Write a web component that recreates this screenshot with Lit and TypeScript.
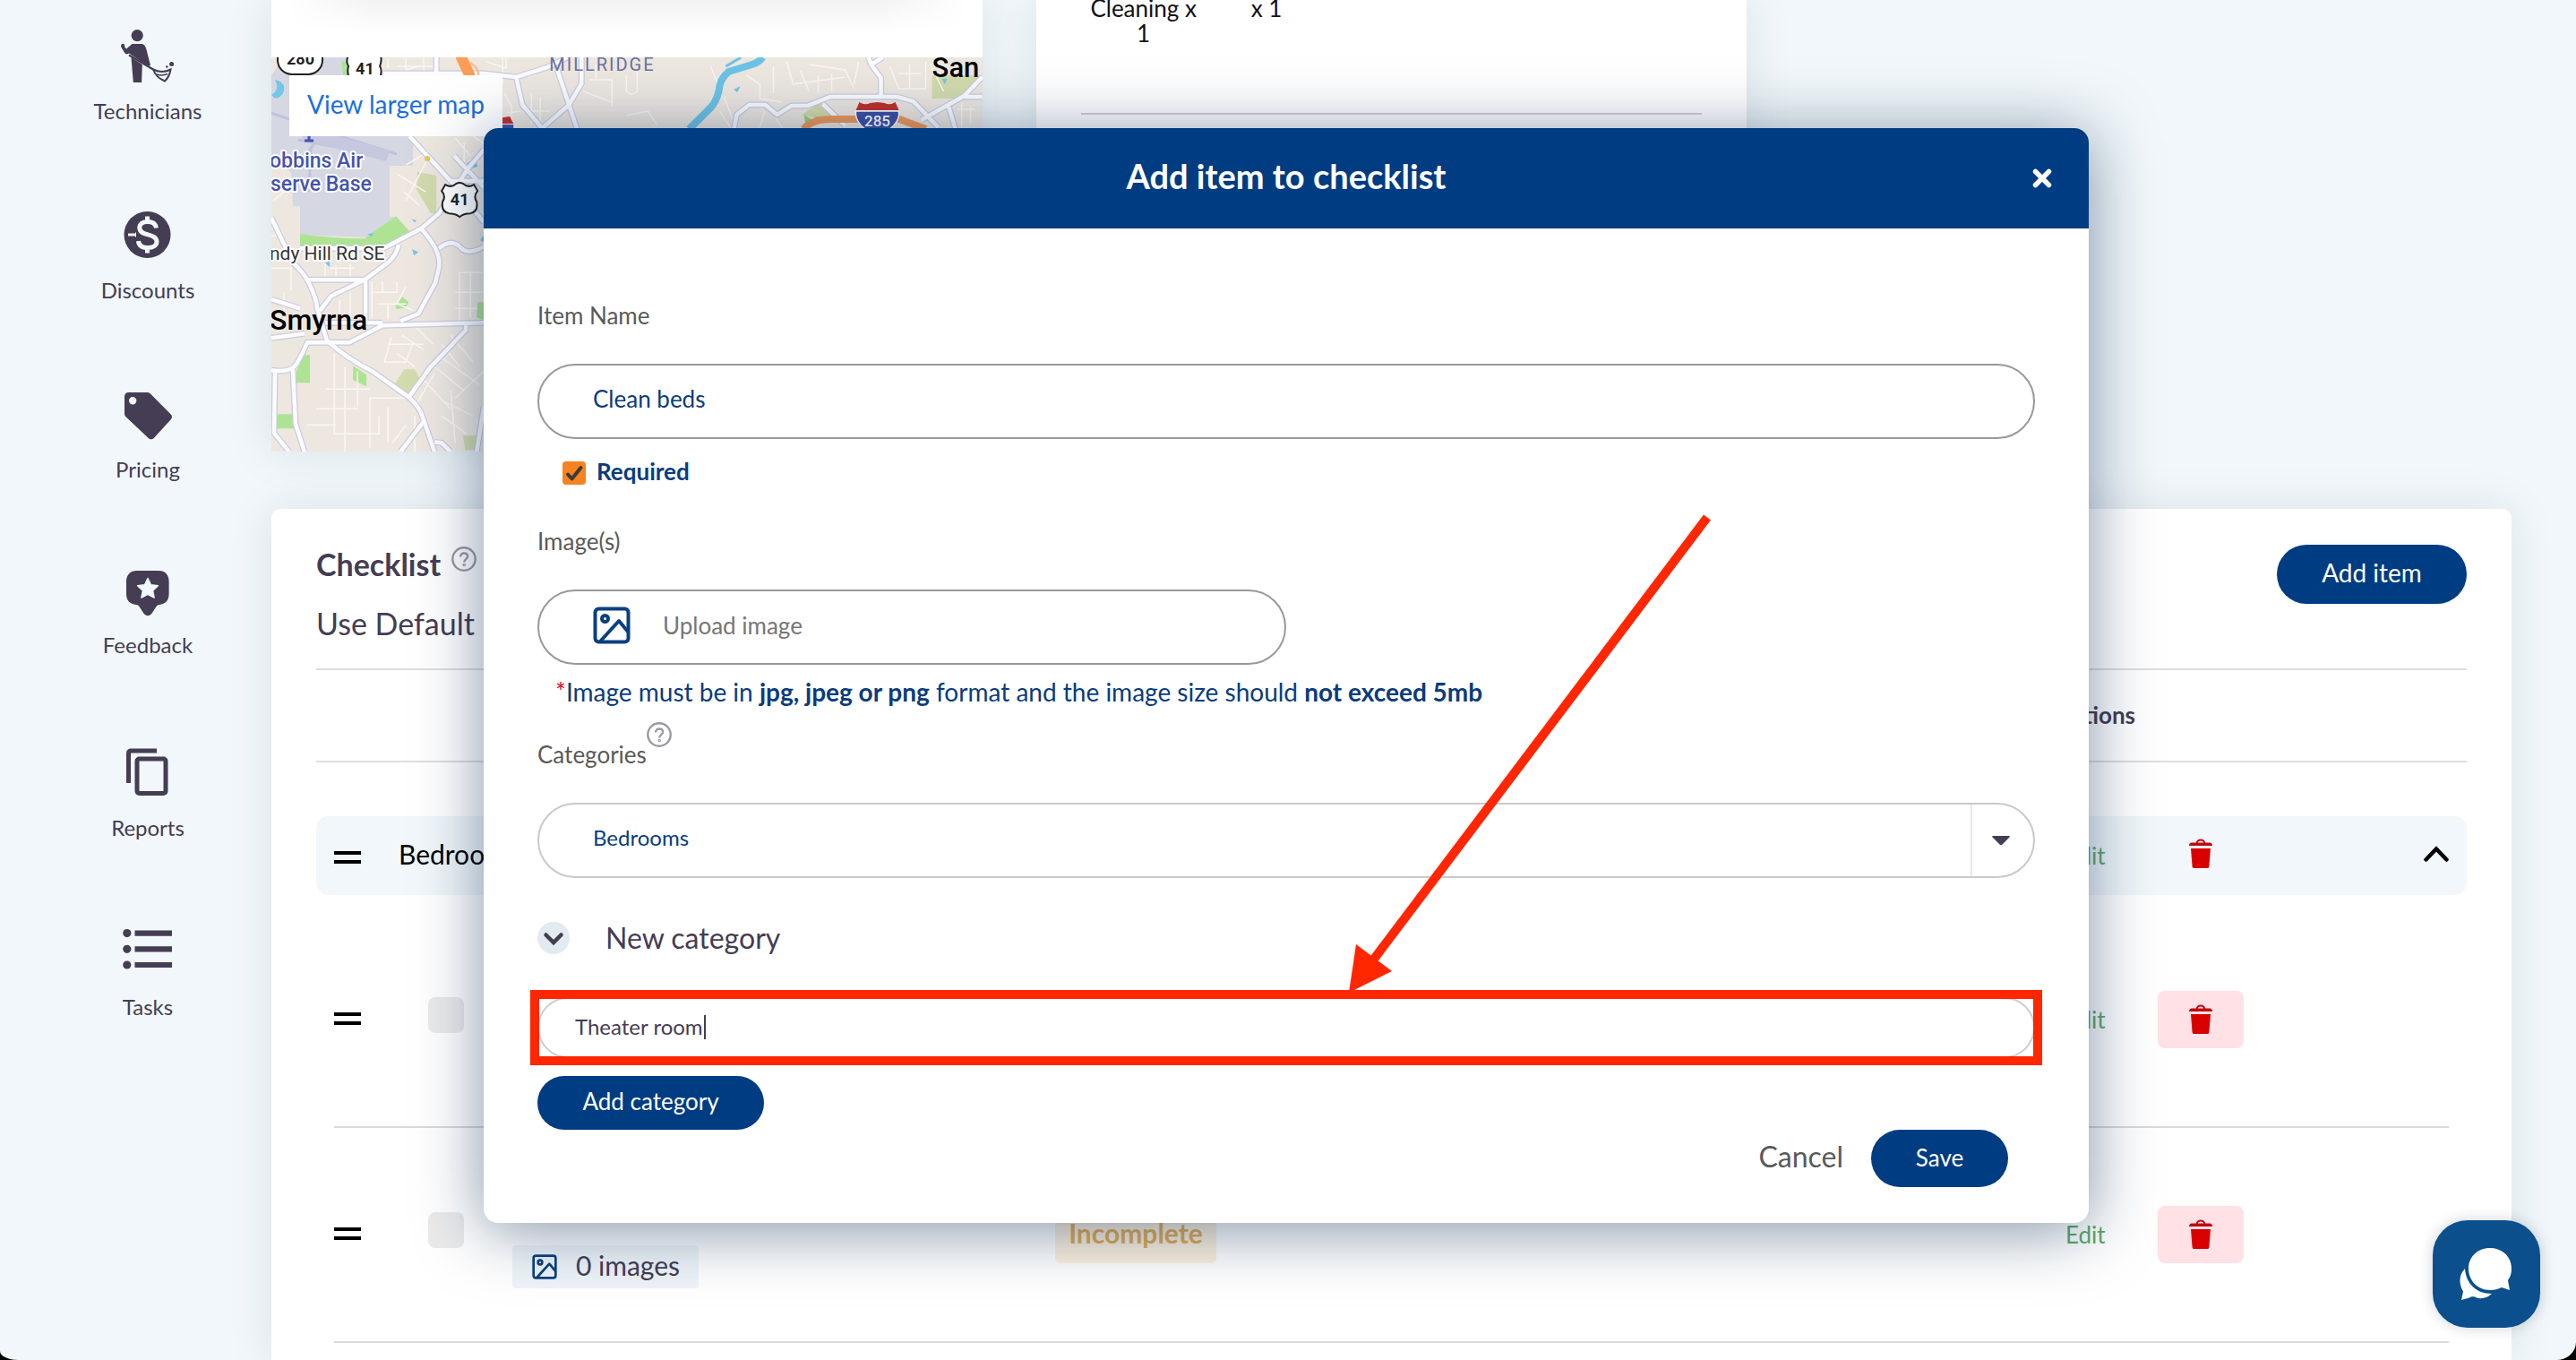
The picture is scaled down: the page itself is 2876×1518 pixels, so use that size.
import { LitElement, html, css, svg } from "lit";
import { customElement, property } from "lit/decorators.js";

const ink = "#443d53";

const navItems = [
  {
    label: "Technicians",
    height: 60,
    art: svg`
      <circle cx="18.2" cy="6.6" r="6.6"/>
      <path d="M12.5 16h10c3.400 0 5 2.600 6 6.500l4.500 17.500-3 .8L9 26.500l-1.800.8c-1.400.4-2.300 0-3-1.200L.4 19.800c-1-2 .3-4.200 2.300-4l1.300 1 .5 3.200 1.700 1.600z"/>
      <path d="M11.500 31l12.300 8-.7 20h-9.300z"/>
      <path d="M9 28.500L36 44.500" fill="none" stroke="#443d53" stroke-width="2.200"/>
      <path d="M36 44.500c7 3.500 13 3.500 19.500 0-.8 4.800-2.600 9.500-6.500 13-5-2-10.500-6-13-13z" fill="none" stroke="#443d53" stroke-width="2"/>
      <path d="M40 50c4.500 1.500 8 1.200 12-.5" fill="none" stroke="#443d53" stroke-width="1.500"/>
      <circle cx="56.600" cy="38.600" r="2.500"/><circle cx="51.300" cy="41.500" r="1.200"/>`,
  },
  {
    label: "Discounts",
    height: 60,
    art: svg`
      <circle cx="29.500" cy="29" r="26"/>
      <path d="M8 29h9M29.500 8.500v7M29.500 42.500v7M39.500 21.500c-.6-4.600-4.300-7-9.700-7-5.600 0-9 2.600-9 6.800 0 4.700 4 6.200 9.400 7.600 5.400 1.400 9.800 3 9.800 7.900 0 4.200-4 6.700-9.800 6.700-6.200 0-10.300-2.500-10.700-7.500" fill="none" stroke="#f1f7fa" stroke-width="5"/>
      <path d="M6 24h10v3.500H6zM6 30.500h10V35H6z"/>`,
  },
  {
    label: "Pricing",
    height: 60,
    art: svg`
      <path fill-rule="evenodd" d="M8.500 5h20.500c1.800 0 3 .6 4.200 1.700l22.300 22.500c2 2 2 4.200 0 6.200L37 55.700c-2 2.200-4.500 2.200-6.600.1L5.800 32.500C4.600 31.300 4 30 4 28.400V9.500C4 7 6 5 8.500 5zM13.200 10a4.200 4.200 0 1 0 0 8.400 4.200 4.200 0 0 0 0-8.400z"/>`,
  },
  {
    label: "Feedback",
    height: 56,
    art: svg`
      <path fill-rule="evenodd" d="M18 4h24c7.500 0 11.600 4.500 11.600 12v14c0 7-4 11.400-10.600 12-2 .2-3 1.200-4 2.800l-4.500 7c-2.500 3.200-6.500 3.200-9 0l-4.500-7c-1-1.600-2-2.600-4-2.800C10 41.400 6 37 6 30V16C6 8.500 10.500 4 18 4z"/>
      <path d="M30 12.500l3.500 7.300 7.900 1-5.800 5.500 1.500 7.900-7.100-3.900-7.100 3.900 1.500-7.900-5.800-5.500 7.900-1z" fill="#f1f7fa" stroke="#f1f7fa" stroke-width="1.500" stroke-linejoin="round"/>`,
  },
  {
    label: "Reports",
    height: 60,
    art: svg`
      <path d="M40 5H11.500Q8.500 5 8.500 8v33" fill="none" stroke="#443d53" stroke-width="5"/>
      <rect x="18" y="14" width="32" height="38.500" rx="2.500" fill="none" stroke="#443d53" stroke-width="5"/>`,
  },
  {
    label: "Tasks",
    height: 60,
    art: svg`
      <circle cx="6.800" cy="8.600" r="4.600"/><circle cx="6.800" cy="26.300" r="4.600"/><circle cx="6.800" cy="44" r="4.600"/>
      <path d="M15.500 5.500h41.500v6.200H15.500zM15.500 23.200h41.500v6.200H15.500zM15.500 40.900h41.500v6.200H15.500z"/>`,
  },
];

const trash = html`<svg width="26" height="34" viewBox="0 0 26 34" aria-hidden="true">
  <path d="M8.500 5.500C9 2.800 10.500 1.500 13 1.500s4 1.300 4.500 4" fill="none" stroke="#c00a10" stroke-width="2"/>
  <path d="M3 4.500h20c1.800 0 3 1.200 3 3.500H0c0-2.300 1.200-3.500 3-3.500z" fill="#c00a10"/>
  <path d="M2 11h22l-1.600 20c-.2 1.400-.8 2-2.200 2H5.800c-1.400 0-2-.6-2.200-2z" fill="#d90000"/>
</svg>`;

const picture = (size: number) => html`<svg width=${size} height=${size} viewBox="0 0 42 42" fill="none" stroke="#0a4080" stroke-width="4" stroke-linejoin="round" aria-hidden="true">
  <rect x="2.500" y="2.500" width="37" height="37" rx="4"/>
  <circle cx="13.500" cy="13.500" r="3.500"/>
  <path d="M8 39l21-23 10 12"/>
</svg>`;

const help = html`<svg width="28" height="28" viewBox="0 0 28 28" fill="none" stroke="#9b99a3" stroke-width="2.400" aria-hidden="true">
  <circle cx="14" cy="14" r="12.700"/>
  <path d="M10 11.500c0-2.400 1.700-4 4.100-4s4 1.500 4 3.600c0 3-3.900 3-3.900 6.300"/>
  <circle cx="14.200" cy="20.500" r=".6"/>
</svg>`;

const drag = html`<svg width="30" height="16" viewBox="0 0 30 16" aria-hidden="true">
  <path d="M0 1h30v4H0zM0 11h30v4H0z"/>
</svg>`;

@customElement("area-map")
class AreaMap extends LitElement {
  static styles = css`
    :host { display: block; position: relative; height: 440px; overflow: hidden; background: #ede7e0; }
    .canvas { display: block; width: 100%; height: 440px; font-family: Roboto, "Noto Sans", sans-serif; }
    .larger {
      position: absolute; left: 20px; top: 20px; padding: 14px 20px 18px; background: #fff;
      color: #1a6fe0; font-size: 28px; line-height: 36px; text-decoration: none; white-space: nowrap;
    }
  `;

  render() {
    const roads = `M154 88L200 138L237 184M0 179L24 229Q36 240 42 252Q50 268 51 280L62 316Q84 336 114 351L152 378Q166 390 169 402L182 440
      M40 248H104L130 229Q140 220 142 209M105 248V296M0 313L37 308M0 349Q22 352 28 342Q36 328 40 318H87L124 299L237 296
      M60 296H124M32 213H125L167 191L187 174L220 123L237 103M167 191Q190 216 187 234L183 251L164 286L144 294
      M187 213Q200 202 210 211Q218 222 237 211M54 283L67 266L104 248M217 299V304L177 346L154 378M4 349L3 419L20 440M24 348L27 409L37 440
      M170 406L144 440M182 429L190 430L200 440M237 390L229 440M125 18H184V0M184 18H237L273 22L308 11L330 0
      M319 14L332 53L341 80M346 0L346 29L332 53L301 80M273 22L280 53L301 78M516 80L519 64L533 53H551L564 64L580 54H598L623 44H698L716 49L744 78
      M680 44V23L669 8L666 0M669 8L682 0M793 22L773 43L755 53L725 70M773 44H793M755 53L763 80M0 270L32 280M204 110L237 145M615 52L640 76M200 138H237`;
    const lanes = `M0 235H22V260M14 262V300M70 330V420M82 345V440M96 350V390M60 370H110M50 392H96M40 410H72M70 420H120V400M110 380V436M110 380H150M130 390V430
      M60 230V246M72 232V246M88 230V247M66 225V235H92M112 250V290M112 262H140V250M118 275H150M124 250V262M130 275V292M150 256L140 275L158 282M76 270V292M88 262V290
      M130 320H170M134 312L126 340H150L158 318M140 330L160 345M146 310L170 326M160 300L180 320M190 320L210 345M200 310L225 340M182 345L215 372M190 335L232 365M170 360L200 392M182 352L160 390
      M210 240V296M222 240V290M210 240H236M205 262H237M205 280H230M195 385L225 400M190 400L218 420M200 372L205 430M160 400V440M150 410L135 430M205 380L237 350
      M2 160L14 150M0 200L12 196V215M140 130L172 150M150 120L175 105M148 150L165 165M176 110L150 160M215 95V120M205 90L222 110M225 88L237 96
      M130 2V12M150 0V14L165 10M170 0V15M140 10H180M258 30V0M240 5L262 12V0M290 40L290 75M300 45V78M280 60H310M355 25H380V55M348 38L380 50M362 25V8
      M396 20V38Q402 44 408 38V16M396 65L420 60L430 75M260 40L268 55V78M262 62L278 60M498 30L490 10M560 10V40M590 15L600 38M530 20L545 30V46L570 50M575 5L582 30L640 22
      M600 8L640 14L650 35M610 20V40M625 18V38M655 5L650 30M690 10L700 35H730V5M700 18H725M712 8V34M735 8L750 38M765 58H785M770 50V78M780 55V74M550 60L545 78M562 66L570 79M505 45L515 70M500 60L512 78`;
    return html`
      <svg class="canvas" viewBox="0 0 793 440" preserveAspectRatio="xMinYMin slice" aria-hidden="true">
        <path d="M14 0H120L132 60H158V121H132V178L139 178L114 201L32 198V166H24L22 128L0 115V20z" fill="#d5d7e2"/>
        <path d="M0 62L40 76L140 108M30 92L125 110M60 80L30 120M44 100L42 150" stroke="#bfc2dc" stroke-width="3" fill="none"/>
        <path d="M30 76L132 104L128 116L36 92z" fill="#c5c8de"/>
        <path d="M32 197Q70 202 104 202L139 177L154 194L134 205L125 213H32zM78 4L86 6V20H80zM36 332H43V363H27L28 350zM91 344L106 354V367L91 360zM6 398H27V414H5zM230 273H237V293L229 290zM138 278L146 267L153 273L150 279L140 281zM143 358L152 348L158 352L150 361z" fill="#aee394"/>
        <path d="M163 128L184 132V174H178L162 148zM592 64L612 50L624 58L622 68L608 68zM737 20H793L772 46H737zM138 364L148 348H160L165 358L152 376zM214 422H229V438H216z" fill="#d2dbac"/>
        <path d="M594 64L604 70L596 76zM606 66H618V70L608 72z" fill="#8fd67f"/>
        <path d="M4 25Q18 28 13 40Q6 50 0 42Q10 36 4 25zM60 229L67 227V236zM218 118L228 114L230 122L222 124zM157 214L164 217L159 221zM156 180L162 182L160 184zM107 197L114 196L112 200zM516 36L523 32L520 39L517 37zM748 24L754 24L751 30zM233 204L237 198V206z" fill="#71c7e8"/>
        <path d="${lanes}" stroke="#faf7f3" stroke-width="1.500" fill="none"/>
        <path d="${roads}" stroke="#c9cce0" stroke-width="7" fill="none" stroke-linejoin="round"/>
        <path d="${roads}" stroke="#fcfcff" stroke-width="4.500" fill="none" stroke-linejoin="round"/>
        <path d="M548 0Q544 6 533 9L510 16Q500 24 499 38Q496 50 490 56L466 80" stroke="#6cc3e6" stroke-width="8" fill="none"/>
        <path d="M524 0L507 10" stroke="#6cc3e6" stroke-width="3" fill="none"/>
        <path d="M594 80Q602 69 626 69H655M698 68L730 80" stroke="#f0995a" stroke-width="8" fill="none"/>
        <path d="M211 -2L222 22" stroke="#ff9c55" stroke-width="12" fill="none"/>
        <path d="M222 6Q234 14 230 22" stroke="#ffb888" stroke-width="2" fill="none"/>
        <circle cx="174" cy="113" r="3" fill="#e8c84c"/>
        <rect x="7" y="-14" width="50" height="33" rx="16" fill="#fff" stroke="#222" stroke-width="2"/>
        <text x="17" y="8" font-size="18" font-weight="700" fill="#222">280</text>
        <path d="M87 -4Q82 4 86 10Q84 16 87 24H121Q124 14 121 10Q124 2 121 -4z" fill="#fff" stroke="#222" stroke-width="2"/>
        <text x="94" y="19" font-size="18" font-weight="700" fill="#222">41</text>
        <path d="M194 142Q201 146 206 141Q210 139 214 141Q219 146 226 142L230 149Q225 155 229 161Q231 172 222 174Q214 174 210 178Q206 174 198 174Q189 172 191 161Q195 155 190 149z" fill="#fff" stroke="#222" stroke-width="2"/>
        <text x="210" y="165" font-size="18" font-weight="700" text-anchor="middle" fill="#222">41</text>
        <path d="M652 60Q650 76 676 88Q702 76 700 60z" fill="#3c4fa6" stroke="#fff" stroke-width="1.500"/>
        <path d="M652 59L656 50Q662 54 668 51L676 50L684 51Q690 54 696 50L700 59z" fill="#c0302c"/>
        <text x="676" y="77" font-size="17" font-weight="500" text-anchor="middle" fill="#fff">285</text>
        <path d="M246 74V69L266 66L270 74z" fill="#c0302c"/>
        <path d="M246 75H270V82H246z" fill="#3c4fa6"/>
        <path d="M37 86H47M42 80V92M37 93H47" stroke="#4553b0" stroke-width="3"/>
        <g paint-order="stroke" stroke="#fff" stroke-width="4" stroke-linejoin="round">
          <text x="-2" y="123" font-size="23" font-weight="500" fill="#4553b0">obbins Air</text>
          <text x="-1" y="149" font-size="23" font-weight="500" fill="#4553b0">serve Base</text>
          <text x="-2" y="226" font-size="21" fill="#333">ndy Hill Rd SE</text>
        </g>
        <text x="-2" y="304" font-size="32" font-weight="500" fill="#000">Smyrna</text>
        <text x="310" y="15" font-size="20" fill="#6a70a0" letter-spacing="2">MILLRIDGE</text>
        <text x="737" y="22" font-size="31" font-weight="500" fill="#000">San</text>
      </svg>
      <a class="larger" href="#map">View larger map</a>
    `;
  }
}

@customElement("status-tag")
class StatusTag extends LitElement {
  @property() label = "";
  static styles = css`
    :host { display: block; width: 180px; box-sizing: border-box; padding: 12px 0 16px; border-radius: 6px; background: #fdf1df;
      color: #e2ad55; font-size: 30px; line-height: 36px; font-weight: 700; text-align: center; }
  `;
  render() { return html`${this.label}`; }
}

@customElement("app-root")
class AppRoot extends LitElement {
  static styles = css`
    :host { display: block; background: #000; font-family: Lato, "Liberation Sans", sans-serif; color: #443d53; }
    * { box-sizing: border-box; }
    button, input, select { font: inherit; color: inherit; margin: 0; }
    button { border: 0; background: none; padding: 0; cursor: pointer; }
    svg { display: block; flex: none; }
    a { color: inherit; text-decoration: none; }

    .page { position: relative; display: flex; min-height: 100vh; overflow: hidden; background: #f1f7fa;
      border-radius: 0 0 22px 20px / 0 0 20px 10px; }
    .sidebar { width: 303px; flex: none; padding: 33px 0 0 27px; }
    .nav-item { display: flex; flex-direction: column; align-items: center; gap: 16px; height: 200px; font-size: 24px; line-height: 30px; }
    .main { flex: 1; min-width: 0; display: flex; flex-direction: column; gap: 64px; padding-right: 72px; }
    .cards { display: grid; grid-template-columns: repeat(3, 1fr); gap: 60px; height: 504px; }
    .card { background: #fff; box-shadow: 0 0 50px rgba(20, 60, 70, 0.1); }
    .strip { height: 64px; background: linear-gradient(#f3f3f3, #fff 36px);
      mask-image: linear-gradient(to right, transparent 2%, #000 14%, #000 86%, transparent 98%); }
    .order { overflow: hidden; }
    .amounts { display: flex; gap: 60px; margin: -5px 60px 75px; font-size: 26px; line-height: 28px; color: #111; }
    .amount { width: 120px; text-align: center; }
    .rule { border: 0; height: 2px; margin: 0 50px; background: #d4d2d2; }

    .checklist { flex: 1; padding: 0 50px; border-radius: 10px 10px 0 0; }
    .intro { display: flex; justify-content: space-between; align-items: flex-start; height: 180px; padding-top: 40px; border-bottom: 2px solid #dedede; font-size: 34px; line-height: 40px; }
    .headings { display: flex; flex-direction: column; gap: 26px; padding-top: 2px; }
    .heading { display: flex; gap: 12px; margin: 0; font-size: 34px; font-weight: 700; }
    .pill { border-radius: 40px; background: #003c82; color: #fff; }
    .add-item { width: 212px; height: 66px; padding-bottom: 4px; font-size: 28px; }

    .items, .items thead, .items tbody { display: block; }
    .line { display: grid; grid-template-columns: 72px 733fr 1118fr 113px 96px 229fr; align-items: center; }
    .line th, .line td { padding: 0; text-align: left; }
    .titles { height: 103px; padding: 0 20px; margin-bottom: 60px; border-bottom: 2px solid #dedede; font-size: 26px; }
    .titles .actions { grid-column: 4; padding-bottom: 2px; }
    .group { height: 88px; padding: 0 20px 4px; margin-bottom: 20px; border-radius: 14px; background: #f1f7fa; font-size: 30px; color: #000; }
    .item { height: 240px; margin: 0 20px; border-bottom: 2px solid #dadada; }
    .name { font-weight: 400; }
    .entry { display: flex; align-items: center; gap: 54px; padding-left: 33px; }
    .tick { appearance: none; width: 40px; height: 40px; margin-bottom: 10px; border-radius: 8px; background: #ebebeb; }
    .chip { display: flex; align-items: center; gap: 21px; width: 208px; height: 48px; margin-top: 72px; padding-left: 22px; border-radius: 4px; background: #eff5f9; font-size: 30px; }
    .chip span { padding-bottom: 4px; }
    .edit { padding-left: 10px; font-size: 26px; color: #5cab6c; }
    .bin { display: flex; align-items: center; justify-content: center; width: 96px; height: 64px; border-radius: 8px; }
    .tinted { background: #ffe1e6; }
    .fold { display: block; margin-left: auto; }

    .chat { position: absolute; right: 40px; bottom: 36px; width: 120px; height: 120px; display: grid; place-items: center;
      border-radius: 39px; background: #0b4f8c; box-shadow: 0 0 16px rgba(0, 30, 60, 0.2); }

    .overlay { position: absolute; inset: 0; padding: 143px 544px 0 540px; }
    .modal { border-radius: 16px; background: #fff; box-shadow: 0 8px 72px rgba(10, 40, 80, 0.5); }
    .bar { display: grid; grid-template-columns: 40px 1fr 40px; align-items: center; height: 112px; padding: 0 32px; border-radius: 16px 16px 0 0; background: #003c82; color: #fff; }
    .title { grid-column: 2; margin: 0; padding-bottom: 6px; text-align: center; font-size: 38px; line-height: 48px; font-weight: 700; }
    .close { display: grid; place-items: center; height: 40px; }
    .form { display: flex; flex-direction: column; padding: 81px 60px 40px; font-size: 26px; line-height: 32px; }
    .caption { color: #5a5a5a; margin-bottom: 38px; }
    .field { width: 100%; height: 84px; padding: 0 60px 6px; border: 2px solid #999; border-radius: 42px; background: #fff; color: #0a3c7d; }
    .required { display: flex; align-items: center; gap: 12px; height: 32px; margin: 22px 0 44px 28px; font-weight: 700; color: #0a3c7d; }
    .required-text { padding-bottom: 4px; }
    .box { display: grid; width: 26px; height: 26px; }
    .box > * { grid-area: 1 / 1; }
    .box input { appearance: none; width: 26px; height: 26px; border-radius: 4px; background: #f5831f; }
    .box svg { z-index: 1; pointer-events: none; }
    .upload { display: flex; align-items: center; gap: 36px; width: 50%; padding-top: 2px; color: #767676; }
    .file { position: absolute; width: 1px; height: 1px; opacity: 0; }
    .note { margin: 14px 0 18px 20px; font-size: 28px; color: #0a3c7d; }
    .star { color: #d0103a; }
    .categories { display: flex; height: 52px; }
    .categories label { align-self: flex-end; }
    .picker { display: grid; grid-template-columns: 1fr 72px; }
    .picker select { grid-area: 1 / 1 / 2 / 3; appearance: none; border-color: #c9c9c9; font-size: 24px; }
    .picker svg { grid-area: 1 / 2; z-index: 1; pointer-events: none; }
    .toggle { display: flex; align-items: center; gap: 40px; margin: 49px 0 48px; font-size: 32px; line-height: 36px; }
    .fresh { position: relative; }
    .fresh input { display: block; width: 100%; height: 68px; padding: 0 40px 4px; border: 2px solid #ccc; border-radius: 34px; background: #fff; font-size: 24px; }
    .caret { position: absolute; left: 186px; top: 20px; width: 2px; height: 27px; background: #443d53; }
    .frame { position: absolute; inset: -8px; border: 10px solid #ff2600; pointer-events: none; }
    .arrow { position: absolute; right: 362px; bottom: 73px; pointer-events: none; }
    .add-category { align-self: flex-start; width: 253px; height: 60px; margin-top: 20px; padding-bottom: 4px; }
    .footer { display: flex; justify-content: flex-end; align-items: center; gap: 31px; padding-right: 30px; }
    .cancel { padding-bottom: 4px; font-size: 32px; color: #5a5a5a; }
    .save { width: 153px; height: 64px; padding-bottom: 2px; font-size: 26px; }
  `;

  private item(extra = false) {
    return html`<tr class="line item">
      <td><button aria-label="Reorder">${drag}</button></td>
      <td>
        <div class="entry">
          <input class="tick" type="checkbox" aria-label="Done" />
          ${extra ? html`<div class="chip">${picture(28)}<span>0 images</span></div>` : ""}
        </div>
      </td>
      <td>${extra ? html`<status-tag label="Incomplete"></status-tag>` : ""}</td>
      <td><a class="edit" href="#edit">Edit</a></td>
      <td><button class="bin tinted" aria-label="Delete">${trash}</button></td>
    </tr>`;
  }

  render() {
    return html`
      <div class="page">
        <nav class="sidebar">
          ${navItems.map(
            (n) => html`<a class="nav-item" href="#${n.label}">
              <svg width="60" height=${n.height} viewBox="0 0 60 ${n.height}" fill=${ink} aria-hidden="true">${n.art}</svg>
              <span>${n.label}</span>
            </a>`
          )}
        </nav>

        <main class="main">
          <div class="cards">
            <section class="card"><div class="strip"></div><area-map></area-map></section>
            <section class="card order">
              <div class="amounts"><div class="amount">Cleaning x 1</div><div>x 1</div></div>
              <hr class="rule" />
            </section>
          </div>

          <section class="card checklist">
            <div class="intro">
              <div class="headings">
                <h2 class="heading">Checklist ${help}</h2>
                <div>Use Default</div>
              </div>
              <button class="pill add-item">Add item</button>
            </div>
            <table class="items">
              <thead><tr class="line titles"><th class="actions" scope="col">Actions</th></tr></thead>
              <tbody>
                <tr class="line group">
                  <td><button aria-label="Reorder">${drag}</button></td>
                  <th class="name" scope="row">Bedrooms</th>
                  <td></td>
                  <td><a class="edit" href="#edit">Edit</a></td>
                  <td><button class="bin" aria-label="Delete">${trash}</button></td>
                  <td><button class="fold" aria-label="Collapse">
                    <svg width="28" height="18" viewBox="0 0 28 18" fill="none" stroke="#000" stroke-width="4.500" stroke-linecap="round"><path d="M2.500 15.500L14 3.500l11.500 12"/></svg>
                  </button></td>
                </tr>
                ${this.item()} ${this.item(true)}
              </tbody>
            </table>
          </section>
        </main>

        <div class="overlay">
          <section class="modal" role="dialog" aria-labelledby="dialog-title">
            <header class="bar">
              <h1 class="title" id="dialog-title">Add item to checklist</h1>
              <button class="close" aria-label="Close">
                <svg width="22" height="22" viewBox="0 0 22 22" stroke="#fff" stroke-width="5.500" stroke-linecap="round"><path d="M3.500 3.500l15 15M18.500 3.500l-15 15"/></svg>
              </button>
            </header>
            <div class="form">
              <label class="caption" for="item-name">Item Name</label>
              <input class="field" id="item-name" type="text" .value=${"Clean beds"} />
              <label class="required">
                <span class="box">
                  <input type="checkbox" checked />
                  <svg width="26" height="26" viewBox="0 0 26 26" fill="none" stroke="#3d3a36" stroke-width="4" stroke-linecap="round" stroke-linejoin="round"><path d="M6 14.500l4.500 5L20.500 7"/></svg>
                </span>
                <span class="required-text">Required</span>
              </label>
              <div class="caption">Image(s)</div>
              <label class="field upload">
                ${picture(42)}<span>Upload image</span><input class="file" type="file" accept="image/png,image/jpeg" />
              </label>
              <div class="note"><span class="star">*</span>Image must be in <b>jpg, jpeg or png</b> format and the image size should <b>not exceed 5mb</b></div>
              <div class="caption categories"><label for="category">Categories</label>${help}</div>
              <div class="picker">
                <select class="field" id="category"><option>Bedrooms</option></select>
                <svg width="72" height="84" viewBox="0 0 72 84"><path d="M0 2h2v80H0z" fill="#e8e8e8"/><path d="M25 37h18q1.500 0 .5 1.500l-8 8q-1.500 1.500-3 0l-8-8Q23.500 37 25 37z" fill="#443d53"/></svg>
              </div>
              <div class="toggle">
                <button aria-label="Toggle">
                  <svg width="36" height="36" viewBox="0 0 36 36"><circle cx="18" cy="18" r="18" fill="#e1ebf0"/><path d="M9.500 14.500l8.500 8.500 8.500-8.500" fill="none" stroke="#443d53" stroke-width="4.500" stroke-linecap="round"/></svg>
                </button>
                <label for="new-category">New category</label>
              </div>
              <div class="fresh">
                <input id="new-category" type="text" .value=${"Theater room"} />
                <span class="caret"></span>
                <div class="frame"></div>
                <svg class="arrow" width="404" height="535" viewBox="1508 573 404 535" aria-hidden="true">
                  <path d="M1534 1073L1908 577.500" stroke="#ff2600" stroke-width="10"/>
                  <path d="M1508 1108L1516 1054L1556 1084z" fill="#ff2600"/>
                </svg>
              </div>
              <button class="pill add-category">Add category</button>
              <div class="footer"><button class="cancel">Cancel</button><button class="pill save">Save</button></div>
            </div>
          </section>
        </div>

        <button class="chat" aria-label="Chat">
          <svg width="60" height="60" viewBox="0 0 60 60" fill="#fff">
            <path d="M34 1c14 0 24 10 24 23 0 5-1 9-4 13l2 11-9-3c-4 2-8 3-13 3C20 48 10 37 10 24S20 1 34 1z"/>
            <path d="M6 24c1 16 12 28 30 28-5 5-12 6-17 4.500-4-2-6-1-8 0L2 59l2-9.500C-1 41-1 31 6 24z"/>
          </svg>
        </button>
      </div>
    `;
  }
}
